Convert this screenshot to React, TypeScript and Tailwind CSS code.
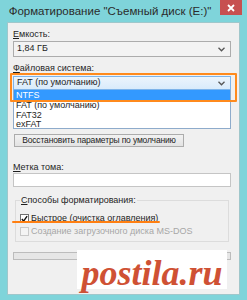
import React from 'react';

const ui = { fontFamily: '"Liberation Sans", Arial, sans-serif' };

const Chevron = () => (
  <svg width="7" height="5" viewBox="0 0 7 5" className="shrink-0">
    <path d="M0.5 0.8 L3.5 3.8 L6.5 0.8" fill="none" stroke="#555" strokeWidth="1.3" />
  </svg>
);

const Label: React.FC<{ first: string; rest: string; className?: string }> = ({ first, rest, className }) => (
  <div className={`text-[9px] text-[#1e1e1e] ${className ?? ''}`}>
    <span className="underline underline-offset-1">{first}</span>
    {rest}
  </div>
);

const App: React.FC = () => {
  return (
    <div className="w-[247px] h-[300px] bg-[#7fd4da] flex flex-col overflow-hidden relative" style={ui}>
      {/* Title bar */}
      <div className="h-[22px] flex items-start shrink-0">
        <div className="flex-1 text-center text-[11.5px] leading-[22px] text-[#2b2b2b] whitespace-nowrap">
          Форматирование "Съемный диск (E:)"
        </div>
        <div className="w-[22px] h-[15px] mr-[5px] bg-[#c75050] flex items-center justify-center">
          <svg width="8" height="8" viewBox="0 0 8 8">
            <path d="M1 1 L7 7 M7 1 L1 7" stroke="#fff" strokeWidth="1.8" />
          </svg>
        </div>
      </div>

      {/* Client area */}
      <div className="mx-[7px] h-[273px] bg-[#f0f0f0] border border-[#9fc7cb] pl-[5px] pr-[8px] pt-[5px] flex flex-col">
        <Label first="Е" rest="мкость:" className="leading-[12px]" />
        <div className="mt-[1px] h-[16px] shrink-0 border border-[#acacac] bg-[#f3f3f3] flex items-center pl-[3px] pr-[5px] justify-between">
          <span className="text-[9px] text-[#1e1e1e]">1,84 ГБ</span>
          <Chevron />
        </div>

        <Label first="Ф" rest="айловая система:" className="mt-[5px] leading-[12px]" />
        <div className="mt-[2px] h-[14px] shrink-0 border border-[#7eb4ea] bg-gradient-to-b from-[#ecf4fc] to-[#d9ebfb] flex items-center pl-[3px] pr-[5px] justify-between">
          <span className="text-[9px] text-[#1e1e1e]">FAT (по умолчанию)</span>
          <Chevron />
        </div>
        <div className="h-[39px] shrink-0 border border-[#8eabcb] border-t-0 bg-white flex flex-col text-[9px] leading-[10px] text-[#1e1e1e] overflow-hidden">
          <div className="h-[10px] shrink-0 bg-[#3399ff] text-white pl-[2px] flex items-center">NTFS</div>
          <div className="h-[10px] shrink-0 pl-[2px] flex items-center">FAT (по умолчанию)</div>
          <div className="h-[9px] shrink-0 pl-[2px] flex items-center">FAT32</div>
          <div className="h-[9px] shrink-0 pl-[2px] flex items-center">exFAT</div>
        </div>

        <div className="mt-[5px] ml-[1px] w-[170px] h-[13px] shrink-0 border border-[#acacac] bg-gradient-to-b from-[#f2f2f2] to-[#e3e3e3] flex items-center justify-center text-[8.5px] tracking-[-0.15px] text-[#1e1e1e] whitespace-nowrap">
          Восстановить параметры по умолчанию
        </div>

        <Label first="М" rest="етка тома:" className="mt-[15px] leading-[11px]" />
        <div className="h-[14px] shrink-0 border border-[#c5c5c5] bg-white" />

        <div className="mt-[13px] mx-[2px] h-[42px] shrink-0 border border-[#dcdcdc] px-[4px] relative">
          <div className="absolute -top-[7px] left-[4px] px-[1px] bg-[#f0f0f0] text-[9px] leading-[12px] text-[#1e1e1e]">
            <span className="underline underline-offset-1">С</span>пособы форматирования:
          </div>
          <div className="flex items-center gap-[2px] mt-[12px] text-[9px] leading-[11px]">
            <div className="w-[9px] h-[9px] border border-[#707070] bg-white flex items-center justify-center shrink-0">
              <svg width="8" height="8" viewBox="0 0 8 8">
                <path d="M1 4 L3 6.5 L7 0.8" fill="none" stroke="#111" strokeWidth="1.6" />
              </svg>
            </div>
            <span className="text-[#1e1e1e] whitespace-nowrap">
              <span className="underline underline-offset-1">Б</span>ыстрое (очистка оглавления)
            </span>
          </div>
          <div className="flex items-center gap-[2px] mt-[2px] text-[9px] leading-[11px]">
            <div className="w-[9px] h-[9px] border border-[#c9c9c9] bg-[#f4f4f4] shrink-0" />
            <span className="text-[#a7a7a7] whitespace-nowrap">Создание загрузочного диска MS-DOS</span>
          </div>
        </div>

        <div className="mt-[10px] h-[8px] shrink-0 border border-[#bcbcbc] bg-[#e6e6e6]" />
      </div>

      {/* annotations */}
      <div className="absolute left-[10px] top-[73px] w-[227px] h-[29px] border-2 border-[#ff8a1c] rounded-[1px]" />
      <div className="absolute left-[12px] top-[221px] w-[148px] h-[2px] bg-[#ff7f11] rounded-full" />

      {/* watermark */}
      <div className="absolute left-[77px] top-[250px] w-[150px] h-[39px] bg-white flex items-end justify-center">
        <span
          className="text-[36px] leading-[36px] font-bold italic text-[#cf5134] -mb-[2px]"
          style={{ fontFamily: '"Liberation Serif", "DejaVu Serif", serif' }}
        >
          postila.ru
        </span>
      </div>
    </div>
  );
};

export default App;
